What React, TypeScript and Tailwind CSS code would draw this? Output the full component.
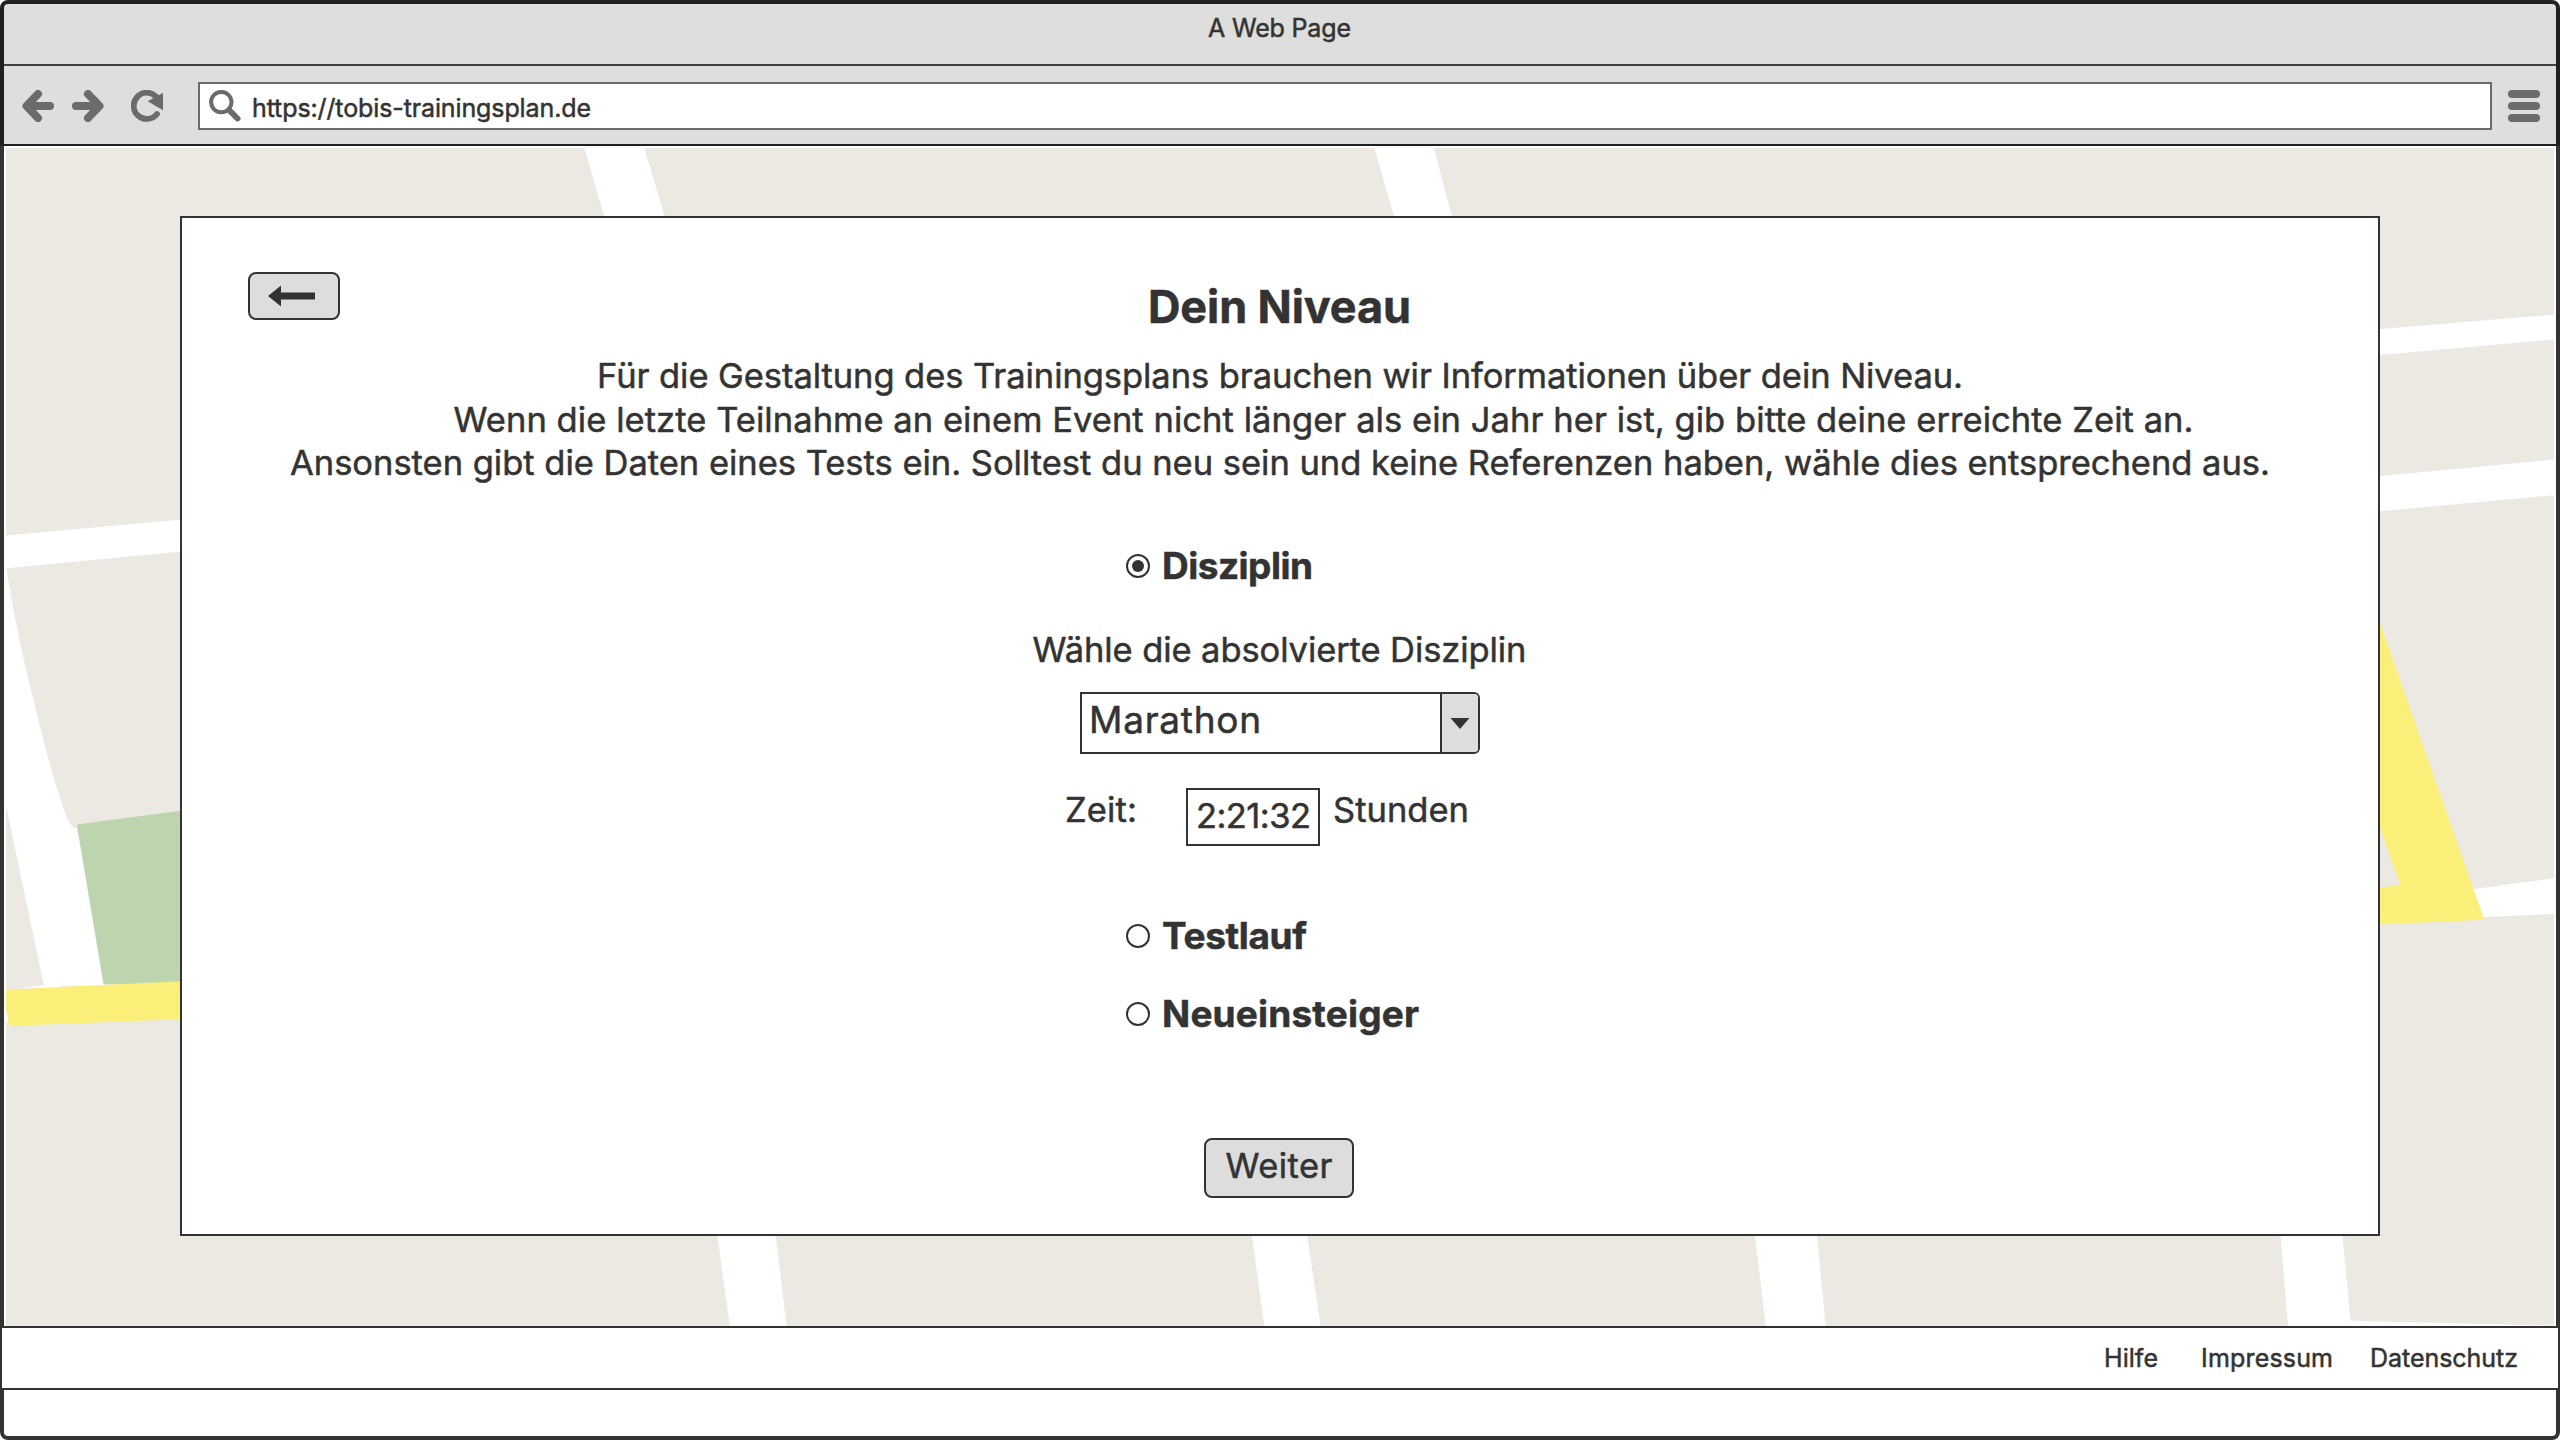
import { useLayoutEffect, useRef, useState } from "react";

/* Single line of text whose tracking is spread so it fills the given width. */
function Fit({ text, className }: { text: string; className: string }) {
  const box = useRef<HTMLSpanElement>(null);
  const inner = useRef<HTMLSpanElement>(null);
  const [spacing, setSpacing] = useState(0);
  useLayoutEffect(() => {
    if (!box.current || !inner.current) return;
    const natural = inner.current.getBoundingClientRect().width;
    setSpacing((box.current.clientWidth - natural) / (text.length - 1));
  }, [text]);
  return (
    <span ref={box} className={`block shrink-0 whitespace-nowrap text-left ${className}`}>
      <span ref={inner} style={{ letterSpacing: `${spacing}px` }}>
        {text}
      </span>
    </span>
  );
}

function StreetMap() {
  return (
    <svg
      className="absolute left-[2px] top-[2px] h-[1178px] w-[2548px]"
      viewBox="6 148 2548 1178"
      preserveAspectRatio="none"
    >
      <rect x="6" y="148" width="2548" height="1178" fill="#ece9e2" />
      <g fill="#fff">
        <path d="M584.4 148H644.2L665.2 218H604.6Z" />
        <path d="M1374.3 148H1433.7L1452.6 218H1394.6Z" />
        <path d="M2378 329.2L2554 314.6V339.5L2378 355.3Z" />
        <path d="M2378 476.2L2554 459.6V495.2L2378 511.5Z" />
        <path d="M2470 889.6L2554 878.3V914L2480 917.2Z" />
        <path d="M6 535.4L182 519.4V551.6L6.5 568.2C13 612 23 658 33 698C42 735 53 780 66.700 817.5Q71.500 829 77 828.500L104 986L44 986L6 805.7Z" />
        <path d="M44 985.500L20 987.5L60 988V985Z" />
        <path d="M717.200 1234H775.4L786.6 1326H729.8Z" />
        <path d="M1251.7 1234H1307L1320.5 1326H1264.3Z" />
        <path d="M1754.8 1234H1816.8L1825.6 1326H1765.8Z" />
        <path d="M2280.4 1234H2342.3L2350.600 1320.7L2554 1325.700V1326H2288Z" />
        <path d="M6 1005L10 1027L6 1020Z" />
      </g>
      <path d="M77 824.6L182 810.5V984H103.500Z" fill="#bdd5ae" />
      <path d="M6 990L60 987L182 981.3V1019L9 1026L6 1008.6Z" fill="#faef78" />
      <path
        d="M2378 617.500L2484.3 919.8L2378 924.4V887.5L2400.5 885.5L2378 822Z"
        fill="#faef78"
      />
    </svg>
  );
}

function Toolbar() {
  return (
    <div className="flex h-[78px] items-start pl-[18px] pr-4 pt-4 text-[#6b6b6b]">
      <svg className="mt-2 h-8 w-8" viewBox="0 0 32 32" fill="none" stroke="currentColor" strokeWidth="8" strokeLinecap="round" strokeLinejoin="round">
        <path d="M16 4L4.500 16L16 28M5 16H28" />
      </svg>
      <svg className="ml-[18px] mt-2 h-8 w-8" viewBox="0 0 32 32" fill="none" stroke="currentColor" strokeWidth="8" strokeLinecap="round" strokeLinejoin="round">
        <path d="M16 4L27.500 16L16 28M27 16H4" />
      </svg>
      <svg className="ml-[27px] mt-2 h-8 w-8" viewBox="0 0 32 32">
        <path d="M26 24A13.100 13.100 0 1 1 25 6.500" fill="none" stroke="currentColor" strokeWidth="5.800" strokeLinecap="round" />
        <path d="M32 2.700V20.300L16.700 11.300Z" fill="currentColor" />
      </svg>
      <div className="ml-[35px] flex h-12 w-[2294px] items-start border-2 border-[#6b6b6b] bg-white">
        <svg className="ml-[9px] mt-1.5 h-8 w-[33px]" viewBox="0 0 33 32" fill="none" stroke="currentColor">
          <circle cx="12.300" cy="12.100" r="10.200" strokeWidth="4" />
          <path d="M20 20L28.500 28.500" strokeWidth="6" strokeLinecap="round" />
        </svg>
        <Fit text="https://tobis-trainingsplan.de" className="ml-[10px] mt-[8px] w-[339px] text-[25px] leading-8 text-[#333]" />
      </div>
      <div className="ml-4 mt-2 flex w-8 flex-col gap-1">
        <div className="h-2 rounded-full bg-[#6b6b6b]" />
        <div className="h-2 rounded-full bg-[#6b6b6b]" />
        <div className="h-2 rounded-full bg-[#6b6b6b]" />
      </div>
    </div>
  );
}

function RadioRow({ text, width, checked, className }: { text: string; width: string; checked?: boolean; className: string }) {
  return (
    <div className={`flex h-12 items-start pl-[944px] ${className}`}>
      <div className="mt-[14px] flex size-6 items-center justify-center rounded-full border-2 border-[#333]">
        {checked && <div className="size-3 rounded-full bg-[#333]" />}
      </div>
      <Fit text={text} className={`ml-3 mt-[2px] text-[37px] font-bold leading-[48px] ${width}`} />
    </div>
  );
}

export default function App() {
  return (
    <div className="flex h-[1440px] w-[2560px] flex-col overflow-hidden bg-white font-['Inter','Lato',sans-serif] text-[#333] [-webkit-text-stroke:0.5px_#333]">
      <header className="h-[146px] shrink-0 rounded-t-lg border-x-4 border-b-2 border-t-4 border-[#231f20] bg-[#dededc]">
        <div className="flex h-[62px] justify-center border-b-2 border-[#404040] pt-[8px]">
          <Fit text="A Web Page" className="-ml-px w-[143px] text-[25px] leading-8" />
        </div>
        <Toolbar />
      </header>

      <main className="relative h-[1180px] shrink-0 border-x-4 border-[#333]">
        <StreetMap />
        <section className="relative mx-[176px] mt-[70px] flex h-[1020px] flex-col border-2 border-[#333] bg-white pt-[54px]">
          <div className="grid h-[82px] grid-cols-[1fr_262px_1fr] items-start">
            <button className="ml-[66px] flex h-12 w-[92px] items-center rounded-lg border-2 border-[#333] bg-[#ddd] pl-[18px]">
              <svg className="h-[22px] w-[47px]" viewBox="0 0 47 22" fill="#333">
                <path d="M0 11L13 0.500V7.500H47V14.500H13V21.500Z" />
              </svg>
            </button>
            <Fit text="Dein Niveau" className="-ml-px mt-[5px] w-[263px] text-[45px] font-bold leading-[60px]" />
          </div>

          <div className="flex flex-col items-center text-[34.5px] leading-[43.5px]">
            <Fit text="Für die Gestaltung des Trainingsplans brauchen wir Informationen über dein Niveau." className="w-[1366px]" />
            <Fit text="Wenn die letzte Teilnahme an einem Event nicht länger als ein Jahr her ist, gib bitte deine erreichte Zeit an." className="ml-[87px] w-[1740px]" />
            <Fit text="Ansonsten gibt die Daten eines Tests ein. Solltest du neu sein und keine Referenzen haben, wähle dies entsprechend aus." className="w-[1980px]" />
          </div>

          <RadioRow text="Disziplin" width="w-[151px]" checked className="mt-[55.5px]" />

          <div className="mt-[40px] flex justify-center text-[34.5px] leading-[44px]">
            <Fit text="Wähle die absolvierte Disziplin" className="-ml-px w-[494px]" />
          </div>

          <div className="mx-auto mt-[20px] flex h-[62px] w-[400px] rounded-r-md border-2 border-[#333]">
            <div className="w-[358px] pl-[7px] pt-[2px]">
              <Fit text="Marathon" className="w-[172px] text-[37px] leading-[48px]" />
            </div>
            <div className="flex flex-1 items-center justify-center rounded-r-[4px] border-l-2 border-[#333] bg-[#ddd]">
              <svg className="h-[11px] w-5" viewBox="0 0 20 11" fill="#333">
                <path d="M0.500 0H19.500L10 11Z" />
              </svg>
            </div>
          </div>

          <div className="mt-[34px] flex h-[58px] items-start pl-[883px] text-[34.5px] leading-[44px]">
            <Fit text="Zeit:" className="w-[72px]" />
            <div className="ml-[49px] h-[58px] w-[134px] border-2 border-[#333] pl-2 pt-[4px]">
              <Fit text="2:21:32" className="w-[115px]" />
            </div>
            <Fit text="Stunden" className="ml-[13px] w-[136px]" />
          </div>

          <RadioRow text="Testlauf" width="w-[145px]" className="mt-[64px]" />
          <RadioRow text="Neueinsteiger" width="w-[257px]" className="mt-[30px]" />

          <button className="ml-[1022px] mt-[102px] flex h-[60px] w-[150px] justify-center rounded-lg border-2 border-[#333] bg-[#ddd] pt-[4px] text-[34.5px] leading-[44px]">
            <Fit text="Weiter" className="w-[107px]" />
          </button>
        </section>
      </main>

      <footer className="flex h-16 shrink-0 border-2 border-[#333] bg-white pl-[2102px] pt-[14px] text-[25px] leading-8">
        <Fit text="Hilfe" className="w-[54px]" />
        <Fit text="Impressum" className="ml-[43px] w-[132px]" />
        <Fit text="Datenschutz" className="ml-[37px] w-[148px]" />
      </footer>
      <div className="h-[50px] rounded-b-lg border-x-4 border-b-4 border-[#333] bg-white" />
    </div>
  );
}
